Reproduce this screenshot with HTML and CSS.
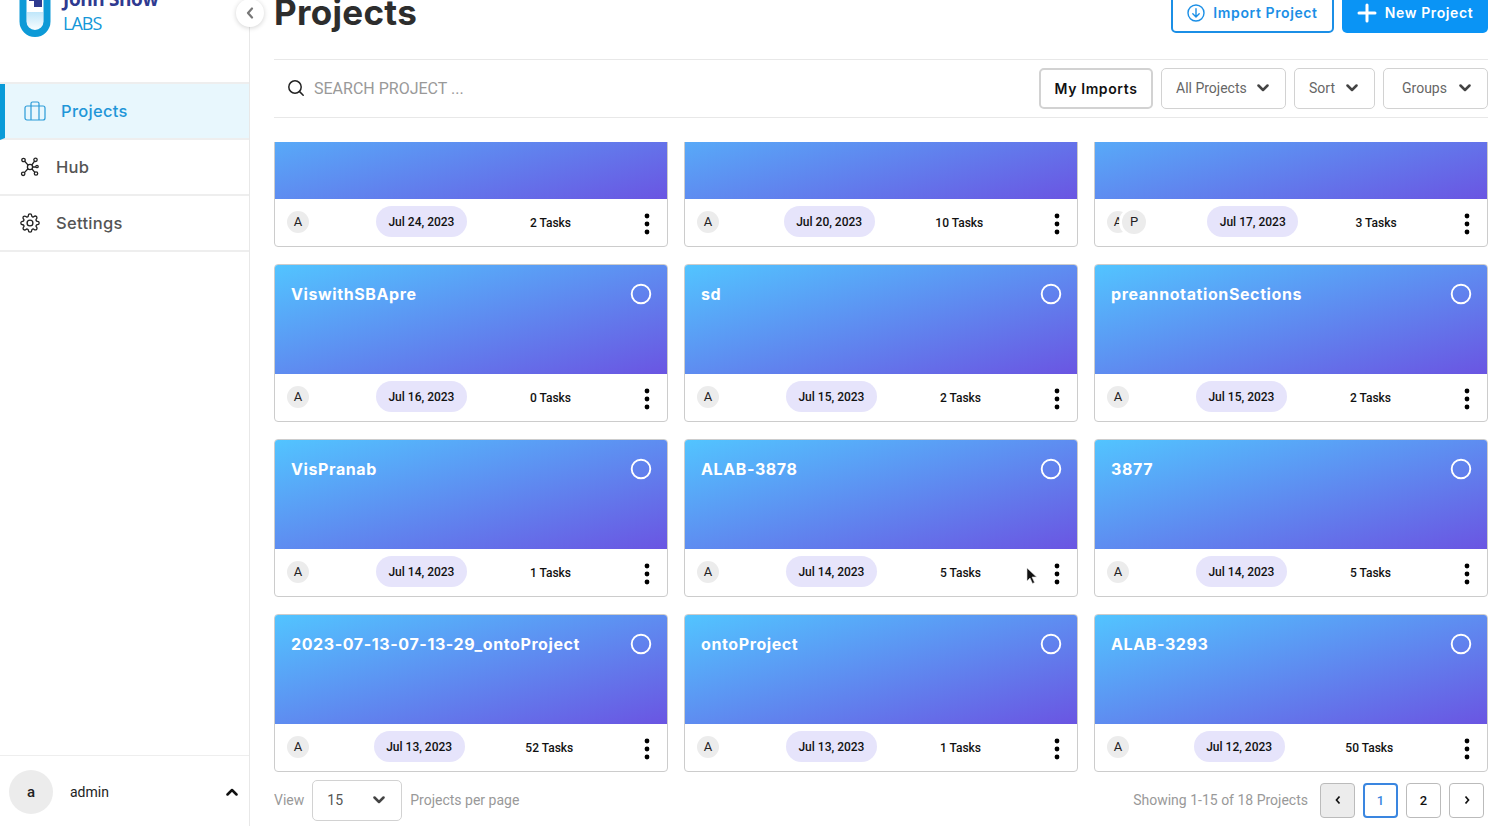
FILE: index.html
```html
<!DOCTYPE html>
<html lang="en">
<head>
  <meta charset="UTF-8">
  <title>Projects</title>
  <link rel="stylesheet" href="styles.css">
</head>
<body>
  <svg class="defs" width="0" height="0">
    <symbol id="chev-down" viewBox="0 0 12 8"><path d="M1.500 1.500 6 6l4.500-4.500" fill="none" stroke="currentColor" stroke-width="2.500" stroke-linecap="round" stroke-linejoin="round"/></symbol>
    <symbol id="dots" viewBox="0 0 6 22"><circle cx="3" cy="3" r="2.400"/><circle cx="3" cy="11" r="2.400"/><circle cx="3" cy="19" r="2.400"/></symbol>
    <symbol id="ring" viewBox="0 0 22 22"><circle cx="11" cy="11" r="9.300" fill="none" stroke="#fff" stroke-width="1.900"/></symbol>
    <linearGradient id="tube-fill" x1="0" y1="0" x2="0" y2="1"><stop offset="0" stop-color="#bfe6fa"/><stop offset="1" stop-color="#fff"/></linearGradient>
  </svg>

  <div class="app">
    <aside class="sidebar">
      <div class="logo">
        <svg class="logo-tube" width="32" height="46" viewBox="0 0 32 46">
          <rect x="8" y="20" width="16" height="20" fill="url(#tube-fill)"/>
          <path d="M4 0v29.500a12 12 0 0 0 24 0V0" fill="none" stroke="#0d9ad7" stroke-width="7"/>
          <path d="M10 0h13v15H15v-6h-5z" fill="#2f3a90"/>
        </svg>
        <div class="logo-text">
          <span class="logo-john">John Snow</span>
          <span class="logo-labs">LABS</span>
        </div>
      </div>
      <button class="collapse">
        <svg width="8" height="12" viewBox="0 0 8 12"><path d="M6 1.500 2 6l4 4.500" fill="none" stroke="#777" stroke-width="2.200" stroke-linecap="round" stroke-linejoin="round"/></svg>
      </button>

      <nav class="side-nav">
        <a class="side-link active">
          <svg width="22" height="20" viewBox="0 0 22 20" fill="none" stroke="#2a9bd8" stroke-width="1.200"><rect x="1" y="5" width="20" height="14" rx="2"/><path d="M7 5V2.500A1.500 1.500 0 0 1 8.500 1h5A1.500 1.500 0 0 1 15 2.500V5M7 5v14M15 5v14"/></svg>
          Projects
        </a>
        <a class="side-link">
          <svg width="20" height="20" viewBox="0 0 20 20" fill="none" stroke="#222" stroke-width="1.300"><circle cx="10" cy="10" r="2.600"/><circle cx="3.500" cy="3" r="1.700"/><circle cx="15.500" cy="2.800" r="1.700"/><circle cx="3.200" cy="16.800" r="1.700"/><circle cx="16" cy="16.500" r="1.700"/><circle cx="17" cy="9.500" r="1.200"/><path d="m4.700 4.300 3.400 3.800M14.600 4.200 11.800 8M4.400 15.600 8 11.800M14.800 15.300 12 12M12.600 10H15.800"/></svg>
          Hub
        </a>
        <a class="side-link">
          <svg width="20" height="20" viewBox="0 0 24 24" fill="none" stroke="#222" stroke-width="1.600" stroke-linecap="round" stroke-linejoin="round"><circle cx="12" cy="12" r="3.500"/><path d="M19.400 15a1.650 1.650 0 0 0 .33 1.820l.06.06a2 2 0 0 1 0 2.830 2 2 0 0 1-2.830 0l-.06-.06a1.650 1.650 0 0 0-1.820-.33 1.650 1.650 0 0 0-1 1.510V21a2 2 0 0 1-2 2 2 2 0 0 1-2-2v-.09A1.650 1.650 0 0 0 9 19.400a1.650 1.650 0 0 0-1.820.33l-.06.06a2 2 0 0 1-2.830 0 2 2 0 0 1 0-2.830l.06-.06a1.650 1.650 0 0 0 .33-1.820 1.650 1.650 0 0 0-1.510-1H3a2 2 0 0 1-2-2 2 2 0 0 1 2-2h.09A1.650 1.650 0 0 0 4.600 9a1.650 1.650 0 0 0-.33-1.820l-.06-.06a2 2 0 0 1 0-2.830 2 2 0 0 1 2.830 0l.06.06a1.650 1.650 0 0 0 1.820.33H9a1.650 1.650 0 0 0 1-1.510V3a2 2 0 0 1 2-2 2 2 0 0 1 2 2v.09a1.650 1.650 0 0 0 1 1.510 1.650 1.650 0 0 0 1.820-.33l.06-.06a2 2 0 0 1 2.830 0 2 2 0 0 1 0 2.830l-.06.06a1.650 1.650 0 0 0-.33 1.820V9a1.650 1.650 0 0 0 1.510 1H21a2 2 0 0 1 2 2 2 2 0 0 1-2 2h-.09a1.650 1.650 0 0 0-1.510 1z"/></svg>
          Settings
        </a>
      </nav>

      <div class="user">
        <span class="user-avatar">a</span>
        <span class="user-name">admin</span>
        <svg class="user-chev" width="12" height="8"><use href="#chev-down"/></svg>
      </div>
    </aside>

    <main class="main">
      <header class="page-head">
        <h1>Projects</h1>
        <div class="head-actions">
          <button class="btn btn-outline">
            <svg width="18" height="18" viewBox="0 0 18 18" fill="none" stroke="#1b8fe6" stroke-width="1.400" stroke-linecap="round" stroke-linejoin="round"><circle cx="9" cy="9" r="8"/><path d="M9 4.800v8M5.800 9.800 9 13l3.200-3.200"/></svg>
            Import Project
          </button>
          <button class="btn btn-primary">
            <svg width="20" height="20" viewBox="0 0 20 20"><path d="M10 2v16M2 10h16" stroke="#fff" stroke-width="3" stroke-linecap="round"/></svg>
            New Project
          </button>
        </div>
      </header>

      <div class="toolbar">
        <svg class="search-icon" width="18" height="18" viewBox="0 0 18 18" fill="none" stroke="#222" stroke-width="1.500" stroke-linecap="round"><circle cx="8" cy="8" r="6.200"/><path d="m12.600 12.600 3.600 3.600"/></svg>
        <span class="search-text">SEARCH PROJECT ...</span>
        <button class="my-imports">My Imports</button>
        <button class="drop drop-all">All Projects <svg width="12" height="8"><use href="#chev-down"/></svg></button>
        <button class="drop drop-sort">Sort <svg width="12" height="8"><use href="#chev-down"/></svg></button>
        <button class="drop drop-groups">Groups <svg width="12" height="8"><use href="#chev-down"/></svg></button>
      </div>

      <div class="scroller">
        <div class="grid">

          <div class="card">
            <div class="card-top"></div>
            <div class="card-foot">
              <div class="avatars"><span class="avatar">A</span></div>
              <span class="date">Jul 24, 2023</span>
              <span class="tasks">2 Tasks</span>
              <svg class="dots" width="6" height="22"><use href="#dots"/></svg>
            </div>
          </div>
          <div class="card">
            <div class="card-top"></div>
            <div class="card-foot">
              <div class="avatars"><span class="avatar">A</span></div>
              <span class="date">Jul 20, 2023</span>
              <span class="tasks">10 Tasks</span>
              <svg class="dots" width="6" height="22"><use href="#dots"/></svg>
            </div>
          </div>
          <div class="card">
            <div class="card-top"></div>
            <div class="card-foot">
              <div class="avatars"><span class="avatar">A</span><span class="avatar avatar-over">P</span></div>
              <span class="date">Jul 17, 2023</span>
              <span class="tasks">3 Tasks</span>
              <svg class="dots" width="6" height="22"><use href="#dots"/></svg>
            </div>
          </div>

          <div class="card">
            <div class="card-top"><span class="card-title">ViswithSBApre</span><svg width="22" height="22"><use href="#ring"/></svg></div>
            <div class="card-foot">
              <div class="avatars"><span class="avatar">A</span></div>
              <span class="date">Jul 16, 2023</span>
              <span class="tasks">0 Tasks</span>
              <svg class="dots" width="6" height="22"><use href="#dots"/></svg>
            </div>
          </div>
          <div class="card">
            <div class="card-top"><span class="card-title">sd</span><svg width="22" height="22"><use href="#ring"/></svg></div>
            <div class="card-foot">
              <div class="avatars"><span class="avatar">A</span></div>
              <span class="date">Jul 15, 2023</span>
              <span class="tasks">2 Tasks</span>
              <svg class="dots" width="6" height="22"><use href="#dots"/></svg>
            </div>
          </div>
          <div class="card">
            <div class="card-top"><span class="card-title">preannotationSections</span><svg width="22" height="22"><use href="#ring"/></svg></div>
            <div class="card-foot">
              <div class="avatars"><span class="avatar">A</span></div>
              <span class="date">Jul 15, 2023</span>
              <span class="tasks">2 Tasks</span>
              <svg class="dots" width="6" height="22"><use href="#dots"/></svg>
            </div>
          </div>

          <div class="card">
            <div class="card-top"><span class="card-title">VisPranab</span><svg width="22" height="22"><use href="#ring"/></svg></div>
            <div class="card-foot">
              <div class="avatars"><span class="avatar">A</span></div>
              <span class="date">Jul 14, 2023</span>
              <span class="tasks">1 Tasks</span>
              <svg class="dots" width="6" height="22"><use href="#dots"/></svg>
            </div>
          </div>
          <div class="card">
            <div class="card-top"><span class="card-title">ALAB-3878</span><svg width="22" height="22"><use href="#ring"/></svg></div>
            <div class="card-foot">
              <div class="avatars"><span class="avatar">A</span></div>
              <span class="date">Jul 14, 2023</span>
              <span class="tasks">5 Tasks</span>
              <svg class="dots" width="6" height="22"><use href="#dots"/></svg>
              <svg class="cursor" width="12" height="18" viewBox="0 0 12 18"><path d="M1 1v13l3-3 2.500 5.500 2-1L6 10h4.500z" fill="#111" stroke="#ddd" stroke-width=".6"/></svg>
            </div>
          </div>
          <div class="card">
            <div class="card-top"><span class="card-title">3877</span><svg width="22" height="22"><use href="#ring"/></svg></div>
            <div class="card-foot">
              <div class="avatars"><span class="avatar">A</span></div>
              <span class="date">Jul 14, 2023</span>
              <span class="tasks">5 Tasks</span>
              <svg class="dots" width="6" height="22"><use href="#dots"/></svg>
            </div>
          </div>

          <div class="card">
            <div class="card-top"><span class="card-title">2023-07-13-07-13-29_ontoProject</span><svg width="22" height="22"><use href="#ring"/></svg></div>
            <div class="card-foot">
              <div class="avatars"><span class="avatar">A</span></div>
              <span class="date">Jul 13, 2023</span>
              <span class="tasks">52 Tasks</span>
              <svg class="dots" width="6" height="22"><use href="#dots"/></svg>
            </div>
          </div>
          <div class="card">
            <div class="card-top"><span class="card-title">ontoProject</span><svg width="22" height="22"><use href="#ring"/></svg></div>
            <div class="card-foot">
              <div class="avatars"><span class="avatar">A</span></div>
              <span class="date">Jul 13, 2023</span>
              <span class="tasks">1 Tasks</span>
              <svg class="dots" width="6" height="22"><use href="#dots"/></svg>
            </div>
          </div>
          <div class="card">
            <div class="card-top"><span class="card-title">ALAB-3293</span><svg width="22" height="22"><use href="#ring"/></svg></div>
            <div class="card-foot">
              <div class="avatars"><span class="avatar">A</span></div>
              <span class="date">Jul 12, 2023</span>
              <span class="tasks">50 Tasks</span>
              <svg class="dots" width="6" height="22"><use href="#dots"/></svg>
            </div>
          </div>

        </div>
      </div>

      <footer class="pager">
        <span>View</span>
        <button class="per-page">15 <svg width="12" height="8"><use href="#chev-down"/></svg></button>
        <span>Projects per page</span>
        <span class="showing">Showing 1-15 of 18 Projects</span>
        <button class="page-btn page-prev"><svg width="6" height="10" viewBox="0 0 6 10"><path d="M4.500 1.500 1.500 5l3 3.500" fill="none" stroke="#111" stroke-width="1.700"/></svg></button>
        <button class="page-btn page-current">1</button>
        <button class="page-btn">2</button>
        <button class="page-btn"><svg width="6" height="10" viewBox="0 0 6 10"><path d="M1.500 1.500 4.500 5l-3 3.500" fill="none" stroke="#111" stroke-width="1.700"/></svg></button>
      </footer>
    </main>
  </div>
</body>
</html>
```
FILE: styles.css
```css
body {
  margin: 0;
  background-color: #fff;
  font-family: Roboto, Arial, sans-serif;
  overflow: hidden;
}

button {
  font-family: inherit;
  background: none;
  cursor: pointer;
}

.defs {
  display: block;
  height: 0;
}

.app {
  display: flex;
  height: 826px;
  overflow: hidden;
}

/* sidebar */
.sidebar {
  position: relative;
  flex: 0 0 249px;
  display: flex;
  flex-direction: column;
  border-right: 1px solid #e8e8e8;
}

.logo {
  display: flex;
  gap: 12px;
  height: 83px;
  padding-left: 19px;
  margin-top: -8px;
}

.logo-tube {
  flex: none;
}

.logo-text {
  display: flex;
  flex-direction: column;
  margin-top: -2px;
}

.logo-john {
  font-family: "Open Sans", sans-serif;
  font-weight: 700;
  font-size: 19px;
  line-height: 18px;
  letter-spacing: -0.4px;
  color: #2f3a90;
}

.logo-labs {
  font-family: "Open Sans", sans-serif;
  font-size: 18px;
  line-height: 30px;
  letter-spacing: -1px;
  color: #1497d8;
}

.collapse {
  position: absolute;
  top: -1px;
  right: -15px;
  width: 28px;
  height: 28px;
  padding: 0;
  display: flex;
  align-items: center;
  justify-content: center;
  border: none;
  border-radius: 50%;
  background-color: #fff;
  box-shadow: 0 1px 5px rgba(0, 0, 0, 0.18);
}

.side-nav {
  display: flex;
  flex-direction: column;
  margin-top: 7px;
  border-top: 2px solid #eee;
}

.side-link {
  display: flex;
  align-items: center;
  gap: 16px;
  height: 54px;
  padding-left: 20px;
  border-bottom: 2px solid #eee;
  font-family: Inter, sans-serif;
  font-weight: 500;
  font-size: 16.5px;
  letter-spacing: 0.3px;
  color: #555;
}

.side-link.active {
  gap: 15px;
  padding-left: 19px;
  border-left: 5px solid #0a9bd8;
  background-color: #e8f7fd;
  color: #1f96d8;
}

.user {
  margin-top: auto;
  height: 71px;
  box-sizing: border-box;
  display: flex;
  align-items: center;
  padding: 2px 11px 0 9px;
  border-top: 1px solid #eee;
}

.user-avatar {
  width: 44px;
  height: 44px;
  display: flex;
  align-items: center;
  justify-content: center;
  border-radius: 50%;
  background-color: #ececec;
  font-size: 15px;
  font-weight: 500;
  color: #222;
}

.user-name {
  margin-left: 17px;
  font-size: 14px;
  color: #222;
}

.user-chev {
  margin-left: auto;
  color: #111;
  transform: rotate(180deg);
}

/* main */
.main {
  flex: 1;
  min-width: 0;
  display: flex;
  flex-direction: column;
  padding: 0 19px 0 24px;
}

.page-head {
  height: 59px;
  display: flex;
  justify-content: space-between;
  border-bottom: 1px solid #e8e8e8;
}

h1 {
  margin: -13px 0 0;
  font-family: Inter, sans-serif;
  font-weight: 700;
  font-size: 35px;
  letter-spacing: 0.3px;
  line-height: 50px;
  color: #2d2d2d;
}

.head-actions {
  display: flex;
  gap: 8px;
  margin-top: -8px;
  height: 41px;
}

.btn {
  display: flex;
  align-items: center;
  justify-content: center;
  gap: 8px;
  border-radius: 5px;
  font-family: Inter, sans-serif;
  font-weight: 600;
  font-size: 14px;
  letter-spacing: 0.6px;
}

.btn-outline {
  width: 163px;
  border: 2px solid #1b8fe6;
  color: #1b8fe6;
}

.btn-primary {
  width: 146px;
  border: none;
  background-color: #0a94f5;
  color: #fff;
}

.toolbar {
  height: 56px;
  display: flex;
  align-items: center;
  padding: 0 0 1px 13px;
  border-bottom: 1px solid #e8e8e8;
}

.search-text {
  margin-left: 9px;
  font-size: 16px;
  color: #999;
}

.my-imports {
  margin-left: auto;
  width: 114px;
  height: 41px;
  border: 2px solid #d2d2d2;
  border-radius: 5px;
  font-family: Inter, sans-serif;
  font-weight: 600;
  font-size: 14px;
  letter-spacing: 0.6px;
  color: #111;
}

.drop {
  height: 41px;
  margin-left: 8px;
  display: flex;
  align-items: center;
  justify-content: space-between;
  border: 1px solid #d2d2d2;
  border-radius: 5px;
  font-size: 14px;
  color: #666;
}

.drop svg,
.per-page svg {
  color: #444;
}

.drop-all {
  width: 125px;
  margin-left: 8px;
  padding: 0 16px 0 14px;
}

.drop-sort {
  width: 81px;
  padding: 0 16px 0 14px;
}

.drop-groups {
  width: 105px;
  padding: 0 16px 0 18px;
}

/* project cards, the list is scrolled so the first row is cut off */
.scroller {
  margin-top: 24px;
  height: 630px;
  overflow: hidden;
}

.grid {
  display: grid;
  grid-template-columns: repeat(3, 394px);
  justify-content: space-between;
  grid-auto-rows: 158px;
  row-gap: 17px;
  margin-top: -53px;
}

.card {
  display: flex;
  flex-direction: column;
  border: 1px solid #ccc;
  border-radius: 4px;
  overflow: hidden;
}

.card-top {
  height: 109px;
  flex: none;
  display: flex;
  justify-content: space-between;
  align-items: flex-start;
  box-sizing: border-box;
  padding: 18px 15px 0 16px;
  background: linear-gradient(to bottom right, #52c4ff, #6a55e2);
}

.card-title {
  font-family: Inter, sans-serif;
  font-weight: 700;
  font-size: 16px;
  letter-spacing: 0.6px;
  line-height: 22px;
  color: #fff;
}

.card-foot {
  position: relative;
  flex: 1;
  display: flex;
  align-items: center;
  justify-content: space-between;
  padding: 0 17px 0 12px;
}

.avatars {
  display: flex;
  align-items: center;
  margin-right: 4px;
  margin-top: -2px;
}

.avatar {
  width: 22px;
  height: 22px;
  display: flex;
  align-items: center;
  justify-content: center;
  border-radius: 50%;
  background-color: #ececec;
  font-size: 13px;
  color: #222;
}

.avatar-over {
  position: relative;
  width: 24px;
  height: 24px;
  margin-left: -7px;
  box-shadow: 0 0 0 3px #fff;
}

.date {
  height: 31px;
  width: 91px;
  margin-top: -2px;
  display: flex;
  align-items: center;
  justify-content: center;
  border-radius: 16px;
  background-color: #e6e4fb;
  font-size: 12px;
  font-weight: 500;
  color: #111;
}

.tasks {
  font-size: 12px;
  font-weight: 500;
  color: #111;
}

.dots {
  margin-left: 10px;
  margin-top: 2px;
}

.cursor {
  position: absolute;
  left: 341px;
  top: 18px;
}

/* bottom bar */
.pager {
  flex: 1;
  display: flex;
  align-items: center;
  gap: 8px;
  padding-right: 4px;
  padding-top: 2px;
  font-size: 14px;
  color: #999;
}

.per-page {
  width: 90px;
  height: 41px;
  display: flex;
  align-items: center;
  justify-content: space-between;
  padding: 0 16px 0 14px;
  border: 1px solid #d2d2d2;
  border-radius: 5px;
  font-size: 14px;
  color: #555;
}

.showing {
  margin-left: auto;
  margin-right: 4px;
}

.page-btn {
  width: 35px;
  height: 35px;
  padding: 0;
  display: flex;
  align-items: center;
  justify-content: center;
  border: 1px solid #bbb;
  border-radius: 4px;
  font-size: 13px;
  font-weight: 500;
  color: #111;
}

.page-prev {
  background-color: #ececec;
}

.page-current {
  border: 2px solid #3a86e0;
  color: #3a86e0;
}
```
